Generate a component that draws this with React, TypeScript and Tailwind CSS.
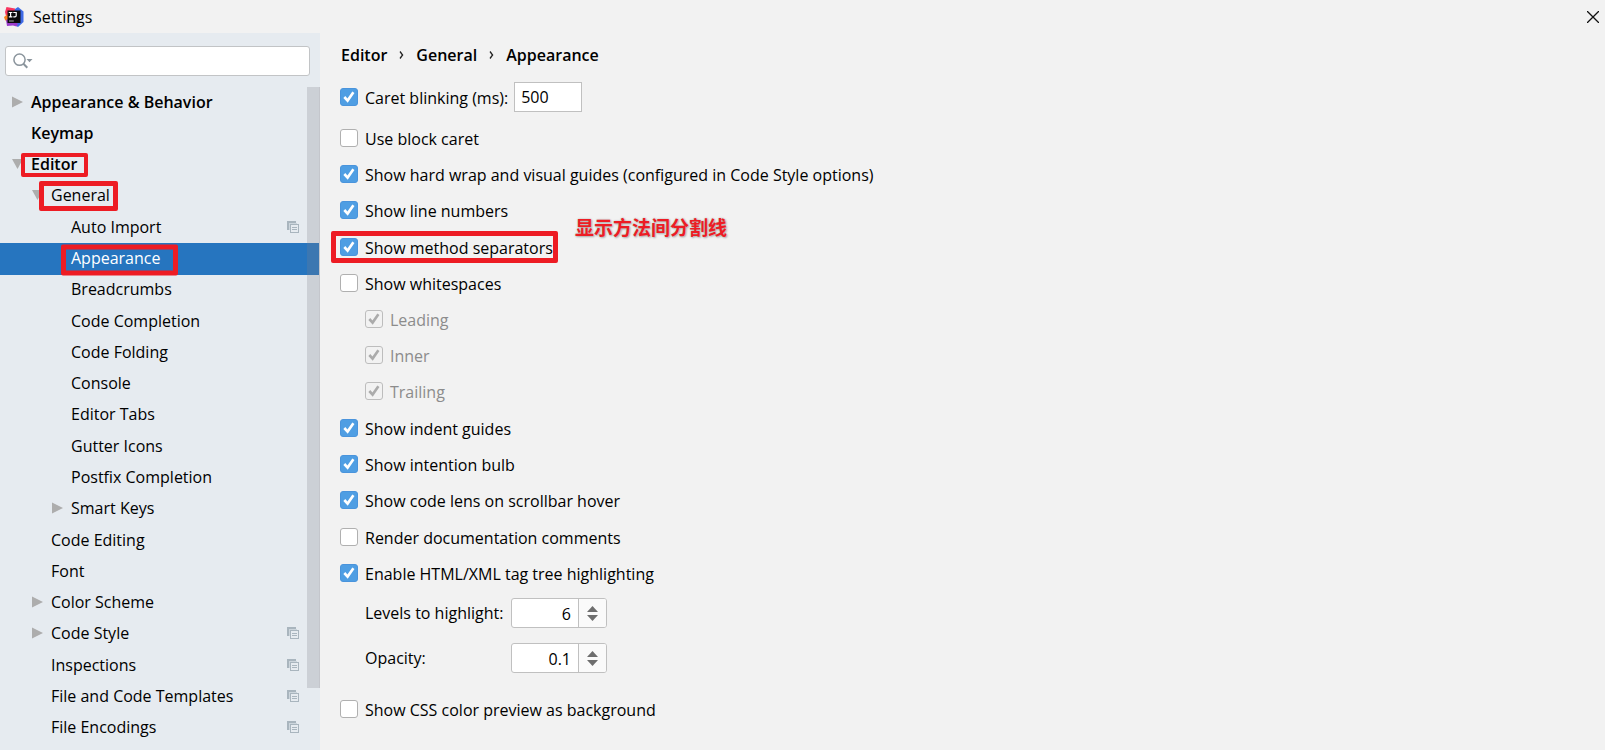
import React, { useState } from "react";

type Item = {
  label: string;
  level: 0 | 1 | 2;
  bold?: boolean;
  arrow?: "right" | "down";
  project?: boolean;
  selected?: boolean;
  mark?: string;
};

const ITEMS: Item[] = [
  { label: "Appearance & Behavior", level: 0, bold: true, arrow: "right" },
  { label: "Keymap", level: 0, bold: true },
  { label: "Editor", level: 0, bold: true, arrow: "down", mark: "left-[21px] w-[67px] h-[24px] border-4" },
  { label: "General", level: 1, arrow: "down", mark: "left-[39px] w-[79px] h-[30px] border-[5px]" },
  { label: "Auto Import", level: 2, project: true },
  { label: "Appearance", level: 2, selected: true, mark: "left-[61px] w-[117px] h-[31px] border-[5px] mt-px" },
  { label: "Breadcrumbs", level: 2 },
  { label: "Code Completion", level: 2 },
  { label: "Code Folding", level: 2 },
  { label: "Console", level: 2 },
  { label: "Editor Tabs", level: 2 },
  { label: "Gutter Icons", level: 2 },
  { label: "Postfix Completion", level: 2 },
  { label: "Smart Keys", level: 2, arrow: "right" },
  { label: "Code Editing", level: 1 },
  { label: "Font", level: 1 },
  { label: "Color Scheme", level: 1, arrow: "right" },
  { label: "Code Style", level: 1, arrow: "right", project: true },
  { label: "Inspections", level: 1, project: true },
  { label: "File and Code Templates", level: 1, project: true },
  { label: "File Encodings", level: 1, project: true },
];

const INDENT = { 0: "pl-[11px]", 1: "pl-[31px]", 2: "pl-[51px]" };

function Logo() {
  return (
    <svg width="20" height="20" viewBox="0 0 20 20" aria-hidden="true">
      <path d="M1 5 L2.5 0 L11 1.5 L11 10 L3 13 Z" fill="#f9345f" />
      <path d="M0 10 L4 7 L8 12 L4 15.5 L1 13 Z" fill="#fc801d" />
      <path d="M11 2 L14 0 L19.5 4.5 L19.5 15 L14 20 L9 17 Z" fill="#3f6ae6" />
      <path d="M2 13 L6 11 L14 17 L12.5 19.5 L9 18.5 L3 19 Z" fill="#9b3ccb" />
      <rect x="3.5" y="3.5" width="13" height="12.5" fill="#0b0a0c" />
      <path d="M4.8 5.5h3.6M6.6 5.5v4.4M4.8 9.9h3.6M9.3 5.5h2.9v3.1q0 1.3-1.3 1.3h-1.6" stroke="#fff" strokeWidth="1.2" fill="none" />
      <path d="M5 14h4.8" stroke="#aaa" strokeWidth="1" />
    </svg>
  );
}

function Arrow({ dir }: { dir?: "right" | "down" }) {
  return (
    <svg className="-mt-[2px] shrink-0" width="12" height="12" viewBox="0 0 12 12" aria-hidden="true">
      {dir === "right" && <path d="M1 0.5 L12 6 L1 11.5 Z" fill="#adadad" />}
      {dir === "down" && <path d="M1 1 H12 L6.5 11 Z" fill="#adadad" />}
    </svg>
  );
}

function ProjectIcon() {
  return (
    <svg className="-mt-[2px]" width="12" height="12" viewBox="0 0 12 12" shapeRendering="crispEdges" aria-hidden="true">
      <rect x="0" y="0" width="9" height="9" fill="#a9b5be" />
      <rect x="2" y="2" width="8" height="7" fill="#ccd5dc" />
      <rect x="3" y="3" width="9" height="9" fill="#a9b5be" />
      <rect x="4" y="4" width="7" height="7" fill="#e6ebf0" />
      <path d="M5 6.5h5M5 8.5h5" stroke="#a9b5be" />
    </svg>
  );
}

function Mark({ className }: { className: string }) {
  return (
    <span
      aria-hidden="true"
      className={`pointer-events-none absolute top-1/2 z-10 -translate-y-1/2 rounded-xs border-[#ed1c24] ${className}`}
    />
  );
}

function Check({ label, on = false, disabled = false }: { label: string; on?: boolean; disabled?: boolean }) {
  const [checked, setChecked] = useState(on);
  return (
    <label className={`flex items-center gap-[7px] ${disabled ? "text-[#8c8c8c]" : ""}`}>
      <span className="grid size-[18px] shrink-0 place-items-center">
        <input
          type="checkbox"
          checked={checked}
          disabled={disabled}
          onChange={(e) => setChecked(e.target.checked)}
          className="col-start-1 row-start-1 size-[18px] appearance-none rounded-[3px] border border-[#b0b0b0] bg-white checked:border-[#4a94dc] checked:bg-[#4f9ee3] disabled:border-[#bdbdbd] disabled:bg-[#f2f2f2]"
        />
        {checked && (
          <svg className="pointer-events-none col-start-1 row-start-1" width="18" height="18" viewBox="0 0 18 18" aria-hidden="true">
            <path d="M4.3 9 L7.6 12.6 L13.4 4.2" fill="none" stroke={disabled ? "#ababab" : "#fff"} strokeWidth="2.6" />
          </svg>
        )}
      </span>
      <span className="pt-[2px]">{label}</span>
    </label>
  );
}

function Spinner({ id, value, step }: { id: string; value: number; step: number }) {
  const [v, setV] = useState(value);
  const move = (d: number) => setV(Math.round((v + d) * 10) / 10);
  return (
    <span className="flex h-[30px] w-24 overflow-hidden rounded-[3px] border border-[#c0c0c0] bg-white">
      <input
        id={id}
        value={v}
        onChange={(e) => setV(Number(e.target.value) || 0)}
        className="w-full min-w-0 flex-1 pt-[2px] pr-[7px] text-right outline-none"
      />
      <span className="flex w-7 flex-col items-center justify-center gap-[3px] border-l border-[#c0c0c0] bg-[#fafafa]">
        <button type="button" aria-label="Increase" onClick={() => move(step)}>
          <svg className="block" width="11" height="6" viewBox="0 0 11 6"><path d="M5.5 0 L11 6 H0 Z" fill="#6e6e6e" /></svg>
        </button>
        <button type="button" aria-label="Decrease" onClick={() => move(-step)}>
          <svg className="block" width="11" height="6" viewBox="0 0 11 6"><path d="M0 0 H11 L5.5 6 Z" fill="#6e6e6e" /></svg>
        </button>
      </span>
    </span>
  );
}

function Chevron() {
  return (
    <svg width="5" height="8" viewBox="0 0 5 8" aria-hidden="true">
      <path d="M1 0.5 L3.6 4 L1 7.5" fill="none" stroke="#222" strokeWidth="1.3" />
    </svg>
  );
}

export default function App() {
  return (
    <div className="flex min-h-screen flex-col bg-[#f2f2f2] font-['Open_Sans','Noto_Sans_CJK_SC',sans-serif] text-base leading-5 text-black">
      <header className="flex h-[33px] items-center gap-[9px] pr-[6px] pl-1">
        <Logo />
        <h1 className="flex-1">Settings</h1>
        <button type="button" aria-label="Close">
          <svg className="block" width="12" height="12" viewBox="0 0 12 12"><path d="M0 0 L12 12 M12 0 L0 12" stroke="#111" strokeWidth="1.3" /></svg>
        </button>
      </header>

      <div className="flex flex-1">
        <aside className="flex w-80 shrink-0 flex-col bg-[#e6ebf0] pt-[13px] pb-[6px]">
          <label className="mr-[10px] ml-[5px] flex h-[30px] items-center rounded-[3px] border border-[#c2c4c6] bg-white pl-[7px]">
            <svg width="20" height="16" viewBox="0 0 20 16" aria-hidden="true">
              <circle cx="6.5" cy="6.7" r="5.6" fill="none" stroke="#8a949c" strokeWidth="1.5" />
              <path d="M10.4 10.8 L14.3 14.8" stroke="#8a949c" strokeWidth="2" />
              <path d="M13.5 6 H19.5 L16.5 9.3 Z" fill="#8a949c" />
            </svg>
            <input type="search" aria-label="Search settings" className="min-w-0 flex-1 px-1 outline-none" />
          </label>

          <nav className="relative mt-[11px] flex flex-1 flex-col" aria-label="Settings categories">
            {ITEMS.map((it) => (
              <a
                key={it.label}
                href="#"
                className={`relative flex min-h-[31px] flex-1 items-center gap-2 pr-[21px] ${INDENT[it.level]} ${it.bold ? "font-semibold" : ""} ${it.selected ? "bg-[#2675bf] text-white" : ""}`}
              >
                <Arrow dir={it.arrow} />
                <span className="flex-1 pb-[2px]">{it.label}</span>
                {it.project && <ProjectIcon />}
                {it.mark && <Mark className={it.mark} />}
              </a>
            ))}
            <span aria-hidden="true" className="absolute top-0 right-0 bottom-14 w-[13px] border-r border-[#c4c6cc] bg-[#80808840]" />
          </nav>
        </aside>

        <main className="min-w-0 flex-1 pl-5">
          <nav aria-label="Breadcrumb" className="flex h-[43px] items-center gap-3 pl-px font-semibold">
            <a href="#">Editor</a>
            <Chevron />
            <a href="#">General</a>
            <Chevron />
            <a href="#">Appearance</a>
          </nav>

          <div className="mb-[2px] flex h-[42px] items-center gap-[6px]">
            <Check label="Caret blinking (ms):" on />
            <input
              aria-label="Caret blinking (ms)"
              defaultValue="500"
              className="h-[30px] w-[68px] border border-[#c0c0c0] bg-white px-[6px] outline-none"
            />
          </div>

          <div className="flex h-9 items-center"><Check label="Use block caret" /></div>
          <div className="flex h-9 items-center"><Check label="Show hard wrap and visual guides (configured in Code Style options)" on /></div>
          <div className="flex h-9 items-center"><Check label="Show line numbers" on /></div>
          <div className="relative mt-px flex h-9 items-center">
            <Check label="Show method separators" on />
            <Mark className="-left-[9px] h-8 w-[227px] border-[5px]" />
            <strong className="absolute -top-3 left-[235px] font-['Noto_Sans_CJK_SC',sans-serif] text-[19px] leading-5 whitespace-nowrap text-[#ed1c24] [text-shadow:0_0_2px_#b0b0b0,1px_1px_2px_#b0b0b0]">
              显示方法间分割线
            </strong>
          </div>
          <div className="flex h-9 items-center"><Check label="Show whitespaces" /></div>
          <div className="pb-px pl-[25px]">
            <div className="flex h-9 items-center"><Check label="Leading" on disabled /></div>
            <div className="flex h-9 items-center"><Check label="Inner" on disabled /></div>
            <div className="flex h-9 items-center"><Check label="Trailing" on disabled /></div>
          </div>
          <div className="flex h-9 items-center"><Check label="Show indent guides" on /></div>
          <div className="flex h-9 items-center"><Check label="Show intention bulb" on /></div>
          <div className="flex h-9 items-center"><Check label="Show code lens on scrollbar hover" on /></div>
          <div className="mt-px flex h-9 items-center"><Check label="Render documentation comments" /></div>
          <div className="flex h-9 items-center"><Check label="Enable HTML/XML tag tree highlighting" on /></div>

          <div className="grid grid-cols-[146px_auto] items-center justify-start gap-y-[15px] pt-[7px] pl-[25px]">
            <label htmlFor="levels" className="pb-px">Levels to highlight:</label>
            <Spinner id="levels" value={6} step={1} />
            <label htmlFor="opacity" className="pb-px">Opacity:</label>
            <Spinner id="opacity" value={0.1} step={0.1} />
          </div>

          <div className="mt-[18px] flex h-9 items-center"><Check label="Show CSS color preview as background" /></div>
        </main>
      </div>
    </div>
  );
}
